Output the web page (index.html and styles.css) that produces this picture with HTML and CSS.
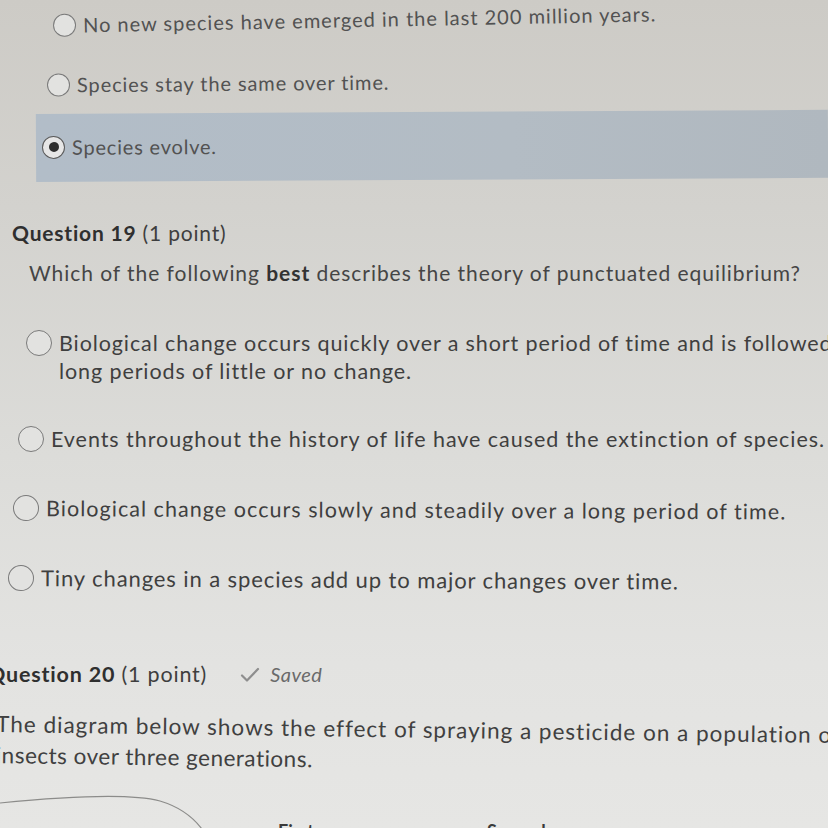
FILE: index.html
```html
<!DOCTYPE html>
<html lang="en">
<head>
<meta charset="utf-8">
<title>Quiz</title>
<link rel="stylesheet" href="styles.css">
</head>
<body>
<main class="page">
  <div class="prev">
    <div class="opt opt-p1"><span class="radio"></span><span class="label">No new species have emerged in the last 200 million years.</span></div>
    <div class="opt opt-p2"><span class="radio"></span><span class="label">Species stay the same over time.</span></div>
    <div class="band">
      <div class="opt opt-p3"><span class="radio radio-on"></span><span class="label">Species evolve.</span></div>
    </div>
  </div>

  <section class="q q19">
    <h2 class="q-title"><b>Question 19</b> (1 point)</h2>
    <p class="q-text">Which of the following <b>best</b> describes the theory of punctuated equilibrium?</p>
    <div class="choices">
      <div class="choice choice-1"><span class="radio"></span><span class="label">Biological change occurs quickly over a short period of time and is followed by<br>long periods of little or no change.</span></div>
      <div class="choice choice-2"><span class="radio"></span><span class="label">Events throughout the history of life have caused the extinction of species.</span></div>
      <div class="choice choice-3"><span class="radio"></span><span class="label">Biological change occurs slowly and steadily over a long period of time.</span></div>
      <div class="choice choice-4"><span class="radio"></span><span class="label">Tiny changes in a species add up to major changes over time.</span></div>
    </div>
  </section>

  <section class="q q20">
    <div class="q20-head">
      <h2 class="q-title q20-title"><b>Question 20</b> (1 point)</h2>
      <span class="saved"><svg class="check" width="20" height="16" viewBox="0 0 20 16"><path d="M2 8.5 L7 13.5 L18 2" fill="none" stroke="#8e8e8e" stroke-width="2.2" stroke-linecap="round" stroke-linejoin="round"/></svg>Saved</span>
    </div>
    <p class="q-text q20-text">The diagram below shows the effect of spraying a pesticide on a population of<br><span class="l2">insects over three generations.</span></p>
    <div class="diagram">
      <svg class="blob" width="230" height="50" viewBox="0 0 230 50"><path d="M0 10 C 60 4, 130 0, 160 8 C 180 14, 195 24, 206 42" fill="none" stroke="#8c8c8a" stroke-width="1.2"/></svg>
      <span class="gen gen-1">First</span>
      <span class="gen gen-2">Second</span>
    </div>
  </section>
</main>
</body>
</html>
```
FILE: styles.css
```css
html, body {
  margin: 0;
  padding: 0;
}
body {
  width: 828px;
  height: 828px;
  overflow: hidden;
  font-family: Lato, "Open Sans", sans-serif;
  color: #424242;
  background: linear-gradient(180deg, #cdcbc6 0%, #d3d2ce 25%, #dcdcd9 55%, #e3e3e1 80%, #e6e6e4 100%);
}
.page {
  display: flex;
  flex-direction: column;
  white-space: nowrap;
}
.opt, .choice {
  display: flex;
  align-items: center;
}
.radio {
  flex: none;
  width: 21px;
  height: 21px;
  border: 1.5px solid #7a7a7a;
  border-radius: 50%;
  background: #e2e2e0;
  display: flex;
  align-items: center;
  justify-content: center;
  box-sizing: content-box;
}
.radio-on {
  border-color: #5a5a5a;
  background: #e6e6e6;
}
.radio-on::after {
  content: "";
  width: 10px;
  height: 10px;
  border-radius: 50%;
  background: #2e2e2e;
}
.prev {
  color: #525252;
  font-size: 20px;
}
.opt .label {
  margin-left: 7px;
}
.opt-p1 {
  height: 44px;
  padding-left: 53px;
  padding-top: 4px;
  letter-spacing: 1px;
  transform: rotate(-1.1deg);
  transform-origin: left center;
}
.opt-p2 {
  height: 50px;
  margin-top: 12px;
  padding-left: 47px;
  letter-spacing: 0.9px;
  transform: rotate(-0.5deg);
  transform-origin: left center;
}
.band {
  margin-top: 4px;
  margin-left: 36px;
  height: 68px;
  background: linear-gradient(90deg, #b2bdc8 0%, #b3bcc4 60%, #b0b8bf 100%);
  display: flex;
  align-items: center;
  transform: rotate(-0.3deg);
  transform-origin: left center;
}
.opt-p3 {
  padding-left: 6px;
  margin-top: -2px;
  letter-spacing: 0.8px;
}
.q-title {
  margin: 0;
  font-size: 21px;
  font-weight: 400;
  line-height: 28px;
  letter-spacing: 0.8px;
  color: #3e3e3e;
}
.q-title b {
  font-weight: 700;
  color: #2f2f2f;
}
.q19 .q-title {
  margin-top: 37px;
  padding-left: 12px;
}
.q-text {
  margin: 12px 0 0;
  padding-left: 29px;
  font-size: 21px;
  line-height: 28px;
  letter-spacing: 0.95px;
  color: #454545;
}
.q-text b {
  font-weight: 700;
  color: #333;
}
.choices {
  display: flex;
  flex-direction: column;
  margin-top: 42px;
  color: #3f3f3f;
  font-size: 21.5px;
}
.choice {
  align-items: flex-start;
}
.choice .radio {
  width: 24px;
  height: 24px;
  margin-top: 1px;
}
.choice .label {
  margin-left: 7px;
  line-height: 28px;
}
.choice-1 { padding-left: 26px; letter-spacing: 0.9px; }
.choice-2 { padding-left: 18px; margin-top: 40px; letter-spacing: 0.95px; }
.choice-3 { padding-left: 13px; margin-top: 41px; letter-spacing: 1.05px; transform: rotate(0.25deg); transform-origin: left center; }
.choice-4 { padding-left: 8px; margin-top: 42px; letter-spacing: 0.9px; transform: rotate(0.3deg); transform-origin: left center; }
.choice-4 .label { font-size: 22px; }

.q20 {
  margin-left: -12px;
}
.q20-head {
  margin-top: 68px;
  display: flex;
  align-items: center;
}
.q20-title {
  font-size: 21.5px;
}
.saved {
  margin-left: 33px;
  display: flex;
  align-items: center;
  font-style: italic;
  font-size: 20px;
  letter-spacing: 0.5px;
  color: #6a6a6a;
}
.check {
  margin-right: 10px;
  margin-top: 2px;
}
.q20-text {
  margin-top: 20px;
  padding-left: 8px;
  font-size: 22.5px;
  line-height: 31px;
  letter-spacing: 1px;
  color: #404040;
  transform: rotate(0.75deg);
  transform-origin: left center;
}
.q20-text .l2 {
  letter-spacing: 0.5px;
}
.diagram {
  position: relative;
  height: 80px;
  margin-left: 12px;
  margin-top: 10px;
}
.blob {
  position: absolute;
  left: 0;
  top: 13px;
}
.gen {
  position: absolute;
  top: 40px;
  font-size: 18px;
  font-weight: 700;
  color: #3a3a3a;
}
.gen-1 { left: 278px; }
.gen-2 { left: 487px; }
```
